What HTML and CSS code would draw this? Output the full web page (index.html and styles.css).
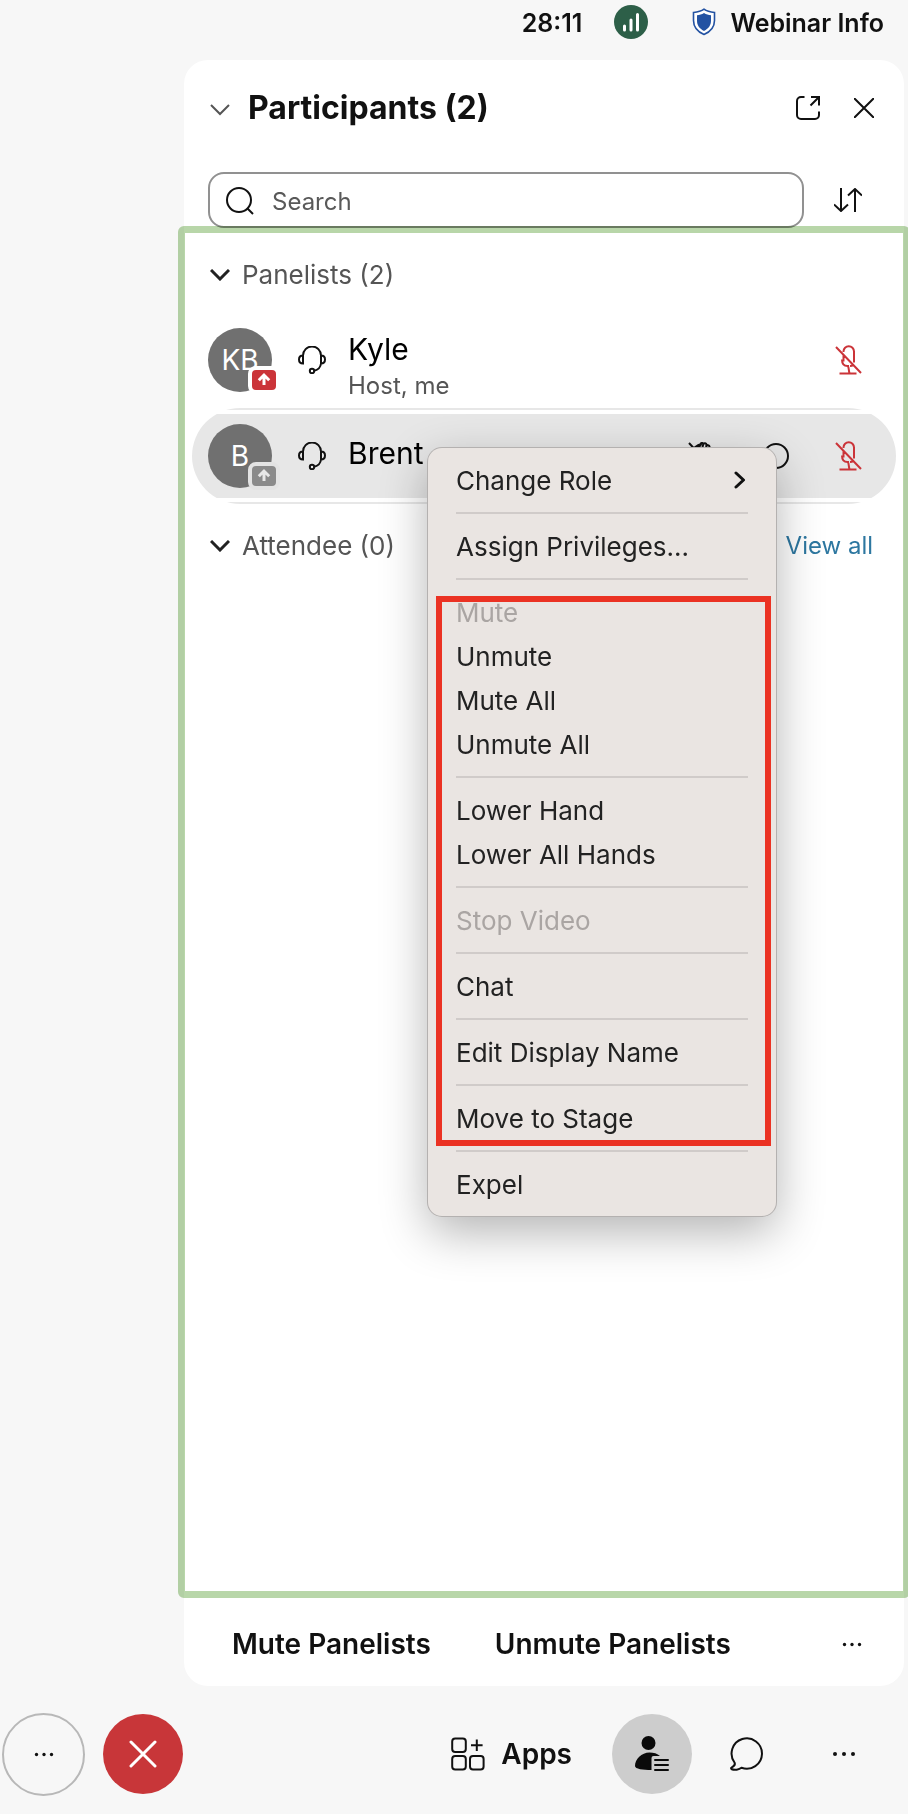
FILE: index.html
```html
<!DOCTYPE html>
<html lang="en">
<head>
<meta charset="utf-8">
<meta name="viewport" content="width=device-width, initial-scale=1">
<title>Participants</title>
<link rel="stylesheet" href="styles.css">
</head>
<body>
<svg class="sprite" aria-hidden="true">
  <symbol id="headset" viewBox="0 0 28 28">
    <path d="M5 9.500a9 9 0 0 1 18 0M5 9.500v8C2.500 17.500 1 16 1 13.500S2.500 9.500 5 9.500zM23 9.500v8c2.500 0 4-1.500 4-4s-1.500-4-4-4zM23 17.500c-.5 4-3.500 6.500-6.800 7.200"/>
    <circle cx="14" cy="25" r="2.200"/>
  </symbol>
  <symbol id="mic-off" viewBox="0 0 28 30">
    <path d="M2 2l25 26M9.500 7V6.500a5 5 0 0 1 10.500 0v11M9.500 10.500v6M8 14.500c0 4 2 6.500 5.500 6.500h1.500M14 21.500c1 1 .5 4 1.500 6.500M5.500 28.500h17M16 21c1.500 0 2.500-.5 3-1"/>
  </symbol>
  <symbol id="arrow-up" viewBox="0 0 24 20">
    <path d="M12 15V5.500M6.800 10.200L12 5l5.200 5.200"/>
  </symbol>
  <symbol id="chevron" viewBox="0 0 20 12"><path d="M1 1l9 9 9-9"/></symbol>
  <symbol id="dots" viewBox="0 0 24 6"><circle cx="3" cy="3" r="2"/><circle cx="12" cy="3" r="2"/><circle cx="21" cy="3" r="2"/></symbol>
</svg>

<header class="topbar">
  <time class="timer">28:11</time>
  <svg class="signal" viewBox="0 0 34 34" role="img" aria-label="Connection good">
    <circle cx="17" cy="17" r="17" fill="#2d5f48"/>
    <path d="M10.500 21v4M17 15v10M23.500 9.500V25" stroke="#fff" stroke-width="3" stroke-linecap="round"/>
  </svg>
  <button class="webinar-info">
    <svg class="shield" viewBox="0 0 24 28">
      <path d="M12 1.200C9 3.500 5.500 4.200 1.500 4.500v8C1.500 19 5 23.500 12 26.500c7-3 10.500-7.500 10.500-14v-8C18.500 4.200 15 3.500 12 1.200z" fill="#fff" stroke="#2352a2" stroke-width="1.600"/>
      <path d="M12 5C9.800 6.500 7.500 7 5 7.200v5.300C5 17 7 20.300 12 23c5-2.700 7-6 7-10.500V7.200C16.500 7 14.200 6.500 12 5z" fill="#2352a2" stroke="none"/>
    </svg>
    Webinar Info
  </button>
</header>

<main class="panel">
  <div class="panel-head">
    <button class="icon-btn" aria-label="Collapse"><svg class="chevron thin"><use href="#chevron"/></svg></button>
    <h1>Participants (2)</h1>
    <button class="icon-btn" aria-label="Pop out">
      <svg class="popout" viewBox="0 0 24 24"><path d="M8.500 1H5a4 4 0 0 0-4 4v14a4 4 0 0 0 4 4h14a4 4 0 0 0 4-4v-3.500M15 1h8v8.500M23 1l-8.500 8.500"/></svg>
    </button>
    <button class="icon-btn" aria-label="Close">
      <svg class="close" viewBox="0 0 20 20"><path d="M0 0l20 20M20 0L0 20"/></svg>
    </button>
  </div>

  <div class="search-row">
    <label class="search">
      <svg class="glass" viewBox="0 0 28 28"><circle cx="13" cy="13" r="12"/><path d="M21.500 21.500L27 27"/></svg>
      <input type="search" placeholder="Search" aria-label="Search participants">
    </label>
    <button class="icon-btn" aria-label="Sort">
      <svg class="sort" viewBox="0 0 28 24"><path d="M7 0v23M0 16.500L7 23l7-6.500M21 24V1M14 7.500L21 1l7 6.500"/></svg>
    </button>
  </div>

  <section class="lists">
    <h2 class="group"><svg class="chevron"><use href="#chevron"/></svg>Panelists (2)</h2>
    <ul class="people">
      <li class="row">
        <div class="row-body">
          <span class="avatar">KB<svg class="badge live"><use href="#arrow-up"/></svg></span>
          <svg class="headset"><use href="#headset"/></svg>
          <div class="who"><span class="name">Kyle</span><span class="role">Host, me</span></div>
          <button class="icon-btn" aria-label="Kyle is muted"><svg class="mic"><use href="#mic-off"/></svg></button>
        </div>
      </li>
      <li class="row selected">
        <div class="row-body">
          <span class="avatar">B<svg class="badge idle"><use href="#arrow-up"/></svg></span>
          <svg class="headset"><use href="#headset"/></svg>
          <div class="who"><span class="name">Brent</span></div>
          <button class="icon-btn" aria-label="Lower hand">
            <svg class="hand" viewBox="0 0 26 28"><path d="M1 1l24 26M6.500 5.500L11 2.500M10 6.500l3.500-4.500M14 7l1.500-5.500M18 7l.5-5M21.500 9V4.500a1.600 1.600 0 0 0-3-.5V2.500a1.600 1.600 0 0 0-3-.5 1.600 1.600 0 0 0-3 0L9 4.500M21.500 9v7c0 6-3 10-8 10-4 0-6-3-8-8L2 14"/></svg>
          </button>
          <button class="icon-btn" aria-label="Chat"><svg class="bubble" viewBox="0 0 28 28"><circle cx="14" cy="14" r="12"/></svg></button>
          <button class="icon-btn" aria-label="Brent is muted"><svg class="mic"><use href="#mic-off"/></svg></button>
        </div>
      </li>
    </ul>
    <div class="attendees">
      <h2 class="group"><svg class="chevron"><use href="#chevron"/></svg>Attendee (0)</h2>
      <a class="view-all" href="#all">View all</a>
    </div>

    <div class="menu" role="menu">
      <button role="menuitem">Change Role <svg class="submenu" viewBox="0 0 12 18"><path d="M2 2l7.500 7L2 16"/></svg></button>
      <hr>
      <button role="menuitem">Assign Privileges...</button>
      <hr>
      <button role="menuitem" disabled>Mute</button>
      <button role="menuitem">Unmute</button>
      <button role="menuitem">Mute All</button>
      <button role="menuitem">Unmute All</button>
      <hr>
      <button role="menuitem">Lower Hand</button>
      <button role="menuitem">Lower All Hands</button>
      <hr>
      <button role="menuitem" disabled>Stop Video</button>
      <hr>
      <button role="menuitem">Chat</button>
      <hr>
      <button role="menuitem">Edit Display Name</button>
      <hr>
      <button role="menuitem">Move to Stage</button>
      <hr>
      <button role="menuitem">Expel</button>
      <div class="highlight"></div>
    </div>
  </section>

  <div class="panel-foot">
    <button class="text-btn">Mute Panelists</button>
    <button class="text-btn">Unmute Panelists</button>
    <button class="icon-btn more" aria-label="More panel options"><svg class="dots small"><use href="#dots"/></svg></button>
  </div>
</main>

<footer class="toolbar">
  <button class="round outline" aria-label="More options"><svg class="dots small"><use href="#dots"/></svg></button>
  <button class="round end" aria-label="Leave"><svg class="leave" viewBox="0 0 28 28"><path d="M2 2l24 24M26 2L2 26"/></svg></button>
  <div class="tools">
    <button class="apps">
      <svg class="apps-icon" viewBox="0 0 34 34"><rect x="1.200" y="1.500" width="13.600" height="13.600" rx="3"/><rect x="1.200" y="19" width="13.600" height="13.600" rx="3"/><rect x="19" y="19" width="13.600" height="13.600" rx="3"/><path d="M25.800 2.500v11.500M20 8.200h11.600"/></svg>
      Apps
    </button>
    <button class="round active" aria-label="Participants">
      <svg class="person" viewBox="0 0 34 36"><circle cx="13.500" cy="7" r="7"/><path d="M16.500 34C8 34 0 33 0 30 0 23 6.500 16.500 14.500 16.500c4 0 8 1 10.500 3.500h-6.500a2 2 0 0 0-2 2z"/><path class="lines" d="M20 24h13M20 29h13M20 34h13"/></svg>
    </button>
    <button class="icon-btn" aria-label="Chat panel">
      <svg class="chat" viewBox="0 0 34 34"><path d="M4.500 25.500A15.200 15.200 0 1 1 11.500 30.800C9 32.800 4.500 33.300 1.800 32.300.8 31.800.8 30.800 1.800 30.300 4.300 29 5.500 27.500 4.500 25.500z"/></svg>
    </button>
    <button class="icon-btn" aria-label="More"><svg class="dots"><use href="#dots"/></svg></button>
  </div>
</footer>
</body>
</html>
```
FILE: styles.css
```css
* { box-sizing: border-box; }

body {
  margin: 0;
  min-height: 100vh;
  display: flex;
  flex-direction: column;
  overflow-x: hidden;
  background: #f7f7f7;
  color: #111;
  font-family: Inter, "Liberation Sans", sans-serif;
  font-size: 24px;
}

button {
  margin: 0;
  padding: 0;
  border: 0;
  background: none;
  color: inherit;
  font: inherit;
}

svg { display: block; flex: none; fill: none; stroke: #111; stroke-width: 2; }
.sprite { position: absolute; width: 0; height: 0; }
.icon-btn { display: flex; flex: none; }

/* Top bar */
.topbar {
  height: 60px;
  padding: 5px 24px 0 0;
  display: flex;
  align-items: flex-start;
  justify-content: flex-end;
  font-size: 25px;
  font-weight: 600;
  line-height: 37px;
}
.signal { width: 34px; height: 34px; margin: 0 44px 0 32px; stroke: none; }
.webinar-info { display: flex; gap: 14px; }
.shield { width: 24px; height: 28px; margin-top: 3px; }

/* Panel */
.panel {
  flex: 1;
  margin: 0 4px 0 184px;
  display: flex;
  flex-direction: column;
  background: #fff;
  border-radius: 24px;
}
.panel-head {
  height: 112px;
  padding: 0 30px 16px 26px;
  display: flex;
  align-items: center;
}
.panel-head h1 {
  flex: 1;
  margin: 0 0 2px 18px;
  font-size: 32px;
  font-weight: 700;
}
.chevron { width: 20px; height: 12px; stroke-width: 2; }
.group .chevron { stroke-width: 3; stroke: #222; }
.thin { margin-top: 3px; stroke: #555; }
.popout { width: 24px; height: 24px; margin-right: 34px; }
.close { width: 20px; height: 20px; }

.search-row {
  padding: 0 42px 0 24px;
  display: flex;
  align-items: center;
  gap: 30px;
}
.search {
  flex: 1;
  height: 56px;
  padding: 2px 16px 0;
  display: flex;
  align-items: center;
  gap: 18px;
  border: 2px solid #919191;
  border-radius: 16px;
}
.search input {
  flex: 1;
  min-width: 0;
  padding: 0;
  border: 0;
  outline: 0;
  background: none;
  font: inherit;
}
.search input::placeholder { color: #595959; opacity: 1; }
.glass { width: 28px; height: 28px; }
.sort { width: 28px; height: 24px; }

/* Lists inside the green frame */
.lists {
  position: relative;
  flex: 1;
  margin: -2px -6px 0;
  padding: 7px;
}
.lists::before {
  content: "";
  position: absolute;
  inset: 0;
  border: 7px solid #b8d6a9;
  border-radius: 6px;
  mix-blend-mode: multiply;
  pointer-events: none;
}
.group {
  margin: 0;
  padding: 4px 0 0 25px;
  height: 79px;
  display: flex;
  align-items: center;
  gap: 12px;
  color: #555;
  font-size: 26px;
  font-weight: 400;
}
.people { margin: 0; padding: 0 7px; list-style: none; }
.row {
  height: 96px;
  border-radius: 48px;
  overflow: hidden;
}
.row-body {
  height: 100%;
  padding: 0 34px 0 16px;
  display: flex;
  align-items: center;
}
.selected {
  padding: 6px 0;
  background: linear-gradient(#e7e7e7 2px, #fff 2px, #fff calc(100% - 2px), #e7e7e7 calc(100% - 2px));
}
.selected .row-body { background: #e7e7e7; }
.avatar {
  position: relative;
  flex: none;
  width: 64px;
  height: 64px;
  border-radius: 50%;
  background: #707070;
  color: #fff;
  font-size: 28px;
  line-height: 64px;
  text-align: center;
}
.badge {
  position: absolute;
  right: -8px;
  bottom: -2px;
  width: 32px;
  height: 28px;
  border: 4px solid #fff;
  border-radius: 8px;
  stroke: #fff;
  stroke-width: 3;
}
.live { background: #cb3439; }
.idle { background: #8a8a8a; border-color: #e3e3e3; stroke: #e7e7e7; }
.headset { width: 28px; height: 28px; margin: 0 22px 0 26px; }
.who { flex: 1; display: flex; flex-direction: column; padding-bottom: 6px; }
.name { color: #000; font-size: 30px; line-height: 40px; }
.role { color: #555; font-size: 24px; line-height: 34px; }
.row:not(.selected) .who { padding: 11px 0 0; }
.mic { width: 28px; height: 30px; stroke: #cb3439; }
.hand { width: 26px; height: 28px; margin-right: 48px; }
.bubble { width: 28px; height: 28px; margin-right: 44px; }

.attendees {
  padding-right: 30px;
  display: flex;
  align-items: center;
  justify-content: space-between;
}
.view-all { padding-top: 4px; color: #2d77a0; text-decoration: none; }

/* Context menu */
.menu {
  position: absolute;
  top: 222px;
  left: 250px;
  right: 134px;
  padding: 10px 28px;
  border-radius: 14px;
  background: #eae5e2;
  box-shadow: 0 0 0 1px #b4b1b0, 0 16px 48px rgba(0, 0, 0, 0.3);
}
.menu button {
  width: 100%;
  height: 44px;
  display: flex;
  align-items: center;
  justify-content: space-between;
  color: #222;
  font-size: 26px;
  text-align: left;
}
.menu button:disabled { color: #aaa5a3; }
.menu hr { height: 2px; margin: 10px 0; border: 0; background: #d0cbc9; }
.submenu { width: 12px; height: 18px; margin-right: 2px; stroke-width: 3; stroke-linecap: round; stroke-linejoin: round; }
.highlight {
  position: absolute;
  inset: 148px 5px 70px 8px;
  border: 6px solid #eb3223;
  pointer-events: none;
}

/* Panel footer */
.panel-foot {
  height: 88px;
  padding: 4px 42px 0 48px;
  display: flex;
  align-items: center;
  gap: 64px;
}
.text-btn { font-size: 28px; font-weight: 600; }
.more { margin-left: auto; }
.dots { width: 24px; height: 6px; fill: #111; stroke: none; }
.small { width: 20px; height: 5px; }

/* Bottom toolbar */
.toolbar {
  height: 128px;
  padding: 8px 52px 0 2px;
  display: flex;
  align-items: center;
}
.round {
  flex: none;
  width: 80px;
  height: 80px;
  display: flex;
  align-items: center;
  justify-content: center;
  border-radius: 50%;
}
.outline { width: 83px; height: 83px; border: 2px solid #b8b8b8; }
.end { margin-left: 18px; background: #c83639; }
.leave { width: 28px; height: 28px; stroke: #fff; stroke-width: 3; stroke-linecap: round; }
.tools { margin-left: auto; display: flex; align-items: center; }
.apps { display: flex; align-items: center; gap: 16px; font-size: 28px; font-weight: 600; }
.apps-icon { width: 34px; height: 34px; }
.active { margin: 0 38px 0 40px; background: #cdcdcd; }
.person { width: 34px; height: 36px; fill: #0a0a0a; stroke: none; }
.lines { stroke: #0a0a0a; stroke-width: 2; stroke-linecap: round; }
.chat { width: 34px; height: 34px; margin-right: 68px; }
```
